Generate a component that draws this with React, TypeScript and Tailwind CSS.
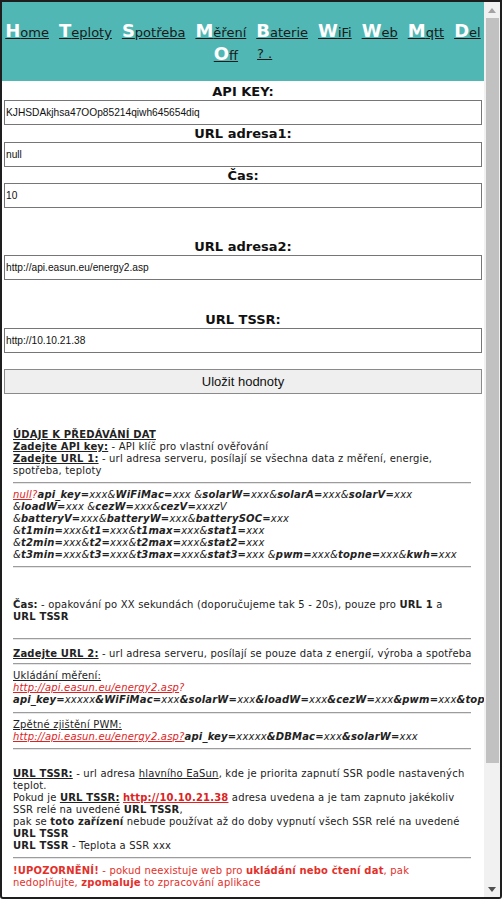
const menu: [string, string][] = [
  ["H", "ome"],
  ["T", "eploty"],
  ["S", "potřeba"],
  ["M", "ěření"],
  ["B", "aterie"],
  ["W", "iFi"],
  ["W", "eb"],
  ["M", "qtt"],
  ["D", "el"],
];

function MenuLink({ big, rest }: { big: string; rest: string }) {
  return (
    <a href="#" className="text-[#1a1a1a] underline">
      <span className="font-bold text-white">{big}</span>
      <span className="text-[13px] leading-[12px]">{rest}</span>
    </a>
  );
}

// key=value string: keys bold, values plain, all italic from the parent
function Query({ text, boldAmp = false }: { text: string; boldAmp?: boolean }) {
  const parts = text.split(/(&?[A-Za-z0-9_]+=)/);
  return (
    <>
      {parts.map((p, i) => {
        if (!p) return null;
        if (p.endsWith("=")) {
          if (p.startsWith("&") && !boldAmp)
            return (
              <span key={i}>
                &amp;<b className="font-bold">{p.slice(1)}</b>
              </span>
            );
          return (
            <b key={i} className="font-bold">
              {p}
            </b>
          );
        }
        return <span key={i}>{p}</span>;
      })}
    </>
  );
}

function Line({ children }: { children: React.ReactNode }) {
  return <div className="whitespace-nowrap">{children}</div>;
}

function Rule({ className = "my-[5px]" }: { className?: string }) {
  return <div className={"h-[2px] border-t border-t-[#9c9c9c] border-b border-b-[#e6e6e6] " + className} />;
}

function Label({ children, className = "" }: { children: React.ReactNode; className?: string }) {
  return <div className={"h-[17px] text-center text-[13px] font-bold leading-[17px] text-[#111] " + className}>{children}</div>;
}

function Field({ value }: { value: string }) {
  return (
    <input
      readOnly
      value={value}
      className="ml-[2px] block h-[25px] w-[478px] border border-[#767676] bg-white px-[1px] font-['Liberation_Sans',Arial,sans-serif] text-[10.2px] text-[#111] outline-none"
    />
  );
}

export default function App() {
  return (
    <div className="flex h-[899px] w-[502px] overflow-hidden rounded-b-[3px] border-2 border-[#1e1e1e] bg-white font-['DejaVu_Sans',Verdana,sans-serif]">
      <div className="w-[482px] shrink-0 overflow-hidden">
        <nav className="h-[79px] bg-[#50b7b4] pt-[17px] text-[18px] leading-[23px]">
          <div className="flex justify-center gap-x-[10px]">
            {menu.map(([big, rest], i) => (
              <MenuLink key={i} big={big} rest={rest} />
            ))}
          </div>
          <div className="flex justify-center gap-x-[19px]">
            <MenuLink big="O" rest="ff" />
            <a href="#" className="text-[13px] text-[#1a1a1a] underline">
              ? .
            </a>
          </div>
        </nav>

        <Label className="mt-[2px]">API KEY:</Label>
        <Field value="KJHSDAkjhsa47OOp85214qiwh645654diq" />
        <Label>URL adresa1:</Label>
        <Field value="null" />
        <Label className="!h-[16px]">Čas:</Label>
        <Field value="10" />

        <Label className="mt-[30px]">URL adresa2:</Label>
        <Field value="http://api.easun.eu/energy2.asp" />

        <Label className="mt-[31px]">URL TSSR:</Label>
        <Field value="http://10.10.21.38" />

        <button className="ml-[2px] mt-[16px] block h-[25px] w-[478px] border border-[#8a8a8a] bg-[#efefef] font-['Liberation_Sans',Arial,sans-serif] text-[13px] text-[#111]">
          Uložit hodnoty
        </button>

        <div className="ml-[11px] mt-[35px] w-[458px] text-[10px] leading-[12px] tracking-[0.18px] text-[#222]">
          <Line>
            <b className="underline">ÚDAJE K PŘEDÁVÁNÍ DAT</b>
          </Line>
          <Line>
            <b className="underline">Zadejte API key:</b> - API klíč pro vlastní ověřování
          </Line>
          <Line>
            <b className="underline">Zadejte URL 1:</b> - url adresa serveru, posílají se všechna data z měření, energie,
          </Line>
          <Line>spotřeba, teploty</Line>
          <Rule />

          <div className="italic">
            <Line>
              <a href="#" className="text-[#dd2222] underline">null</a>
              <span className="text-[#dd2222]">?</span>
              <Query text="api_key=xxx&WiFiMac=xxx &solarW=xxx&solarA=xxx&solarV=xxx" />
            </Line>
            <Line>
              <Query text="&loadW=xxx &cezW=xxx&cezV=xxxzV" />
            </Line>
            <Line>
              <Query text="&batteryV=xxx&batteryW=xxx&batterySOC=xxx" />
            </Line>
            <Line>
              <Query text="&t1min=xxx&t1=xxx&t1max=xxx&stat1=xxx" />
            </Line>
            <Line>
              <Query text="&t2min=xxx&t2=xxx&t2max=xxx&stat2=xxx" />
            </Line>
            <Line>
              <Query text="&t3min=xxx&t3=xxx&t3max=xxx&stat3=xxx &pwm=xxx&topne=xxx&kwh=xxx" />
            </Line>
          </div>
          <Rule />

          <div className="h-[26px]" />
          <Line>
            <b>Čas:</b> - opakování po XX sekundách (doporučujeme tak 5 - 20s), pouze pro <b>URL 1</b> a
          </Line>
          <Line>
            <b>URL TSSR</b>
          </Line>
          <Rule className="mb-[8px] mt-[15px]" />

          <Line>
            <b className="underline">Zadejte URL 2:</b> - url adresa serveru, posílají se pouze data z energií, výroba a spotřeba
          </Line>
          <Rule className="mb-[5px] mt-[3px]" />

          <Line>
            <span className="underline">Ukládání měření:</span>
          </Line>
          <Line>
            <i>
              <a href="#" className="text-[#dd2222] underline">http://api.easun.eu/energy2.asp</a>
              <span className="text-[#dd2222]">?</span>
            </i>
          </Line>
          <Line>
            <i>
              <Query boldAmp text="api_key=xxxxx&WiFiMac=xxx&solarW=xxx&loadW=xxx&cezW=xxx&pwm=xxx&topne=xxx&kwh=xxx" />
            </i>
          </Line>
          <Rule className="mb-[5px] mt-[6px]" />

          <Line>
            <span className="underline">Zpětné zjištění PWM:</span>
          </Line>
          <Line>
            <i>
              <a href="#" className="text-[#dd2222] underline">http://api.easun.eu/energy2.asp?</a>
              <Query boldAmp text="api_key=xxxxx&DBMac=xxx&solarW=xxx" />
            </i>
          </Line>
          <Rule className="mb-[18px] mt-[5px]" />

          <Line>
            <b className="underline">URL TSSR:</b> - url adresa <span className="underline">hlavního EaSun</span>, kde je priorita zapnutí SSR podle nastavených
          </Line>
          <Line>teplot.</Line>
          <Line>
            Pokud je <b className="underline">URL TSSR:</b>{" "}
            <a href="#" className="font-bold text-[#dd2222] underline">http://10.10.21.38</a> adresa uvedena a je tam zapnuto jakékoliv
          </Line>
          <Line>
            SSR relé na uvedené <b>URL TSSR</b>,
          </Line>
          <Line>
            pak se <b>toto zařízení</b> nebude používat až do doby vypnutí všech SSR relé na uvedené
          </Line>
          <Line>
            <b>URL TSSR</b>
          </Line>
          <Line>
            <b>URL TSSR</b> - Teplota a SSR xxx
          </Line>
          <Rule className="mb-[6px] mt-[5px]" />

          <div className="text-[#e2302a]">
            <Line>
              <b>!UPOZORNĚNÍ!</b> - pokud neexistuje web pro <b>ukládání nebo čtení dat</b>, pak
            </Line>
            <Line>
              nedoplňujte, <b>zpomaluje</b> to zpracování aplikace
            </Line>
          </div>
        </div>
      </div>

      <div className="flex w-[16px] shrink-0 flex-col bg-[#f1f1f1]">
        <div className="flex h-[16px] items-center justify-center">
          <svg width="8" height="5" viewBox="0 0 8 5">
            <path d="M4 0 L8 5 L0 5 Z" fill="#a3a3a3" />
          </svg>
        </div>
        <div className="ml-[2px] h-[745px] w-[13px] bg-[#c1c1c1]" />
        <div className="flex-1" />
        <div className="flex h-[16px] items-center justify-center">
          <svg width="8" height="5" viewBox="0 0 8 5">
            <path d="M0 0 L8 0 L4 5 Z" fill="#505050" />
          </svg>
        </div>
      </div>
    </div>
  );
}
